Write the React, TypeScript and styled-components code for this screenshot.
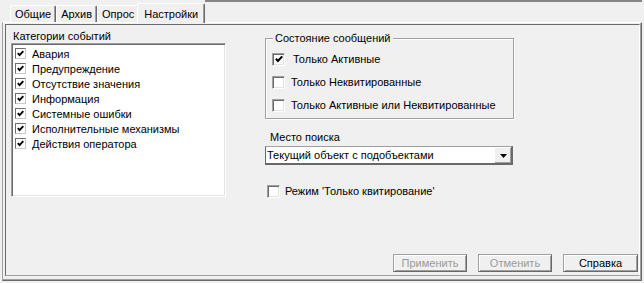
import React from 'react';
import styled, { createGlobalStyle } from 'styled-components';

const GlobalStyle = createGlobalStyle`
  html, body {
    margin: 0;
    padding: 0;
    background: #f0f0f0;
  }
  body {
    font-family: 'Liberation Sans', Arial, sans-serif;
    font-size: 11px;
    color: #000;
  }
  * {
    box-sizing: border-box;
  }
`;

const categories = [
  'Авария',
  'Предупреждение',
  'Отсутствие значения',
  'Информация',
  'Системные ошибки',
  'Исполнительные механизмы',
  'Действия оператора',
];

const tabs = ['Общие', 'Архив', 'Опрос', 'Настройки'];

const CheckMark: React.FC<{ size: number }> = ({ size }) => (
  <svg width={size} height={size} viewBox="0 0 7 7">
    <polyline
      points="0.8,3.2 2.6,5.2 6.3,1.2"
      fill="none"
      stroke="#000"
      strokeWidth="1.9"
    />
  </svg>
);

export default function App() {
  return (
    <>
      <GlobalStyle />
      <Window>
        <TabStrip>
          {tabs.map((t) => (
            <Tab key={t} $active={t === 'Настройки'}>
              {t}
            </Tab>
          ))}
          <StripFiller />
        </TabStrip>

        <TabPage>
          <Inner>
            <Body>
              <LeftCol>
                <CaptionLabel>Категории событий</CaptionLabel>
                <ListBox>
                  {categories.map((c) => (
                    <ListItem key={c}>
                      <SmallBox>
                        <CheckMark size={7} />
                      </SmallBox>
                      {c}
                    </ListItem>
                  ))}
                </ListBox>
              </LeftCol>

              <RightCol>
                <Group>
                  <Legend>Состояние сообщений</Legend>
                  <CheckRow $gap={8}>
                    <Box>
                      <CheckMark size={8} />
                    </Box>
                    Только Активные
                  </CheckRow>
                  <CheckRow $gap={6}>
                    <Box />
                    Только Неквитированные
                  </CheckRow>
                  <CheckRow $gap={6}>
                    <Box />
                    Только Активные или Неквитированные
                  </CheckRow>
                </Group>

                <FieldLabel>Место поиска</FieldLabel>
                <Select>
                  <SelectText>Текущий объект с подобъектами</SelectText>
                  <DropButton>
                    <svg width="7" height="4" viewBox="0 0 7 4">
                      <polygon points="0,0 7,0 3.5,4" fill="#000" />
                    </svg>
                  </DropButton>
                </Select>

                <ModeRow $gap={5}>
                  <Box />
                  Режим 'Только квитирование'
                </ModeRow>
              </RightCol>
            </Body>

            <Footer>
              <Button $width={74} disabled>
                Применить
              </Button>
              <Button $width={74} disabled>
                Отменить
              </Button>
              <Button $width={75}>Справка</Button>
            </Footer>
          </Inner>
        </TabPage>
      </Window>
    </>
  );
}

const Window = styled.div`
  width: 644px;
  height: 283px;
  padding: 0 2px 2px 2px;
  display: flex;
  flex-direction: column;
  background: #f0f0f0;
  overflow: hidden;
`;

const TabStrip = styled.div`
  height: 22px;
  flex-shrink: 0;
  display: flex;
  align-items: flex-end;
  padding-left: 8px;
`;

const Tab = styled.div<{ $active?: boolean }>`
  position: relative;
  z-index: ${(p) => (p.$active ? 2 : 0)};
  height: ${(p) => (p.$active ? 20 : 17)}px;
  margin: 0 ${(p) => (p.$active ? '-2px' : '0')} ${(p) => (p.$active ? '-1px' : '0')};
  padding: ${(p) => (p.$active ? '1px 6px 0' : '0 4px')};
  display: flex;
  align-items: center;
  line-height: 13px;
  background: #f0f0f0;
  border-top: 1px solid #fff;
  border-left: 1px solid #fff;
  border-right: 1px solid #696969;
  border-top-left-radius: 2px;
  border-top-right-radius: 2px;
  box-shadow: inset -1px 0 0 #a0a0a0;
  white-space: nowrap;

  &:first-child {
    margin-left: 0;
  }
`;

const StripFiller = styled.div`
  flex: 1;
  align-self: flex-start;
  margin-left: 2px;
  border-top: 2px solid #858585;
`;

const TabPage = styled.div`
  flex: 1;
  display: flex;
  border: 1px solid;
  border-color: #fff #696969 #696969 #a0a0a0;
  box-shadow: inset -1px -1px 0 #a0a0a0;
  padding: 1px 1px 4px 2px;
`;

const Inner = styled.div`
  flex: 1;
  display: flex;
  flex-direction: column;
  border: 1px solid;
  border-color: #696969 #fff #a0a0a0 #696969;
  padding: 4px 1px 3px 5px;
`;

const Body = styled.div`
  display: flex;
  gap: 39px;
`;

const LeftCol = styled.div`
  width: 215px;
  display: flex;
  flex-direction: column;
`;

const CaptionLabel = styled.div`
  height: 14px;
  line-height: 14px;
  padding-left: 2px;
`;

const ListBox = styled.div`
  height: 154px;
  background: #fff;
  border: 1px solid;
  border-color: #a0a0a0 #fff #fff #a0a0a0;
  box-shadow: inset 1px 1px 0 #696969, inset -1px -1px 0 #e3e3e3;
  padding: 2px 0 0 3px;
  display: flex;
  flex-direction: column;
`;

const ListItem = styled.div`
  height: 15px;
  display: flex;
  align-items: center;
  gap: 6px;
  white-space: nowrap;
`;

const SmallBox = styled.span`
  width: 11px;
  height: 11px;
  flex-shrink: 0;
  display: flex;
  align-items: center;
  justify-content: center;
  background: #fff;
  border: 1px solid;
  border-color: #6e6e6e #c8c8c8 #c8c8c8 #6e6e6e;
`;

const RightCol = styled.div`
  width: 249px;
  display: flex;
  flex-direction: column;
`;

const Group = styled.div`
  position: relative;
  margin-top: 9px;
  border: 1px solid #a0a0a0;
  box-shadow: inset 1px 1px 0 #fff, 1px 1px 0 #fff;
  padding: 12px 0 5px 6px;
  display: flex;
  flex-direction: column;
  gap: 7px;
`;

const Legend = styled.span`
  position: absolute;
  top: -7px;
  left: 7px;
  padding: 0 2px;
  line-height: 13px;
  background: #f0f0f0;
`;

const CheckRow = styled.div<{ $gap: number }>`
  height: 16px;
  display: flex;
  align-items: center;
  gap: ${(p) => p.$gap}px;
  white-space: nowrap;
`;

const ModeRow = styled(CheckRow)`
  margin-top: 18px;
  padding-left: 2px;
`;

const Box = styled.span`
  width: 13px;
  height: 13px;
  flex-shrink: 0;
  display: flex;
  align-items: center;
  justify-content: center;
  background: #fff;
  border: 1px solid;
  border-color: #a0a0a0 #fff #fff #a0a0a0;
  box-shadow: inset 1px 1px 0 #696969, inset -1px -1px 0 #e3e3e3;
`;

const FieldLabel = styled.div`
  margin-top: 11px;
  height: 14px;
  line-height: 14px;
  padding-left: 5px;
`;

const Select = styled.div`
  margin-top: 2px;
  width: 248px;
  height: 19px;
  display: flex;
  background: #fff;
  border-style: solid;
  border-width: 1px 2px 2px 1px;
  border-color: #a0a0a0 #696969 #696969 #696969;
`;

const SelectText = styled.div`
  flex: 1;
  padding-left: 1px;
  line-height: 16px;
  white-space: nowrap;
`;

const DropButton = styled.div`
  width: 17px;
  display: flex;
  align-items: center;
  justify-content: center;
  background: #f0f0f0;
  border-left: 1px solid #fff;
  border-top: 1px solid #fff;
  box-shadow: inset -1px -1px 0 #a0a0a0;
`;

const Footer = styled.div`
  margin-top: auto;
  display: flex;
  justify-content: flex-end;
  gap: 11px;
`;

const Button = styled.button<{ $width: number }>`
  width: ${(p) => p.$width}px;
  height: 18px;
  padding: 0;
  font-family: 'Liberation Sans', Arial, sans-serif;
  font-size: 11px;
  line-height: 14px;
  color: #000;
  background: #f0f0f0;
  border: 1px solid;
  border-color: #a0a0a0 #696969 #696969 #a0a0a0;
  box-shadow: inset 1px 1px 0 #fff, inset -1px -1px 0 #a0a0a0;

  &:disabled {
    color: #9a9a9a;
  }
`;
